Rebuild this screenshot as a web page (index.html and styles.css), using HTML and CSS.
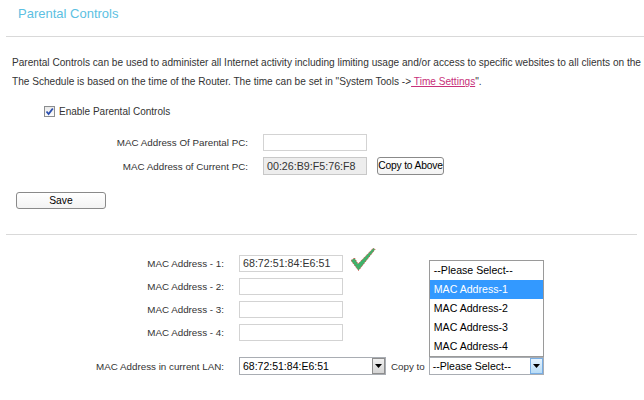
FILE: index.html
```html
<!DOCTYPE html>
<html>
<head>
<meta charset="utf-8">
<link rel="stylesheet" href="styles.css">
</head>
<body>
<div class="page">
  <div class="title">Parental Controls</div>
  <div class="rule"></div>
  <div class="desc">
    <div class="line">Parental Controls can be used to administer all Internet activity including limiting usage and/or access to specific websites to all clients on the LAN.</div>
    <div class="line">The Schedule is based on the time of the Router. The time can be set in "System Tools -&gt;<a class="link" href="#">&nbsp;Time Settings</a>".</div>
  </div>
  <div class="enable">
    <span class="cbox"><svg width="9" height="9" viewBox="0 0 9 9"><path d="M1.5 4.5 L3.6 7 L7.8 1.5" fill="none" stroke="#2b4fb0" stroke-width="1.8"/></svg></span>
    <span>Enable Parental Controls</span>
  </div>
  <div class="form1">
    <div class="row r1">
      <div class="lab">MAC Address Of Parental PC:</div>
      <div class="inp"></div>
    </div>
    <div class="row r2">
      <div class="lab">MAC Address of Current PC:</div>
      <div class="inp ro">00:26:B9:F5:76:F8</div>
      <div class="btn copy">Copy to Above</div>
    </div>
  </div>
  <div class="btn save">Save</div>
  <div class="rule rule2"></div>
  <div class="form2">
    <div class="row">
      <div class="lab">MAC Address - 1:</div>
      <div class="inp">68:72:51:84:E6:51</div>
      <svg class="tick" width="28" height="25" viewBox="0 0 28 25"><path d="M2 13.5 L5.5 11 L9 17 L24.5 1 L26 2.5 L9.5 23.5 Z" fill="#3fb16a" stroke="#d8322e" stroke-width="0.9" stroke-dasharray="1 1.2"/></svg>
    </div>
    <div class="row">
      <div class="lab">MAC Address - 2:</div>
      <div class="inp"></div>
    </div>
    <div class="row">
      <div class="lab">MAC Address - 3:</div>
      <div class="inp"></div>
    </div>
    <div class="row">
      <div class="lab">MAC Address - 4:</div>
      <div class="inp"></div>
    </div>
    <div class="row lanrow">
      <div class="lab">MAC Address in current LAN:</div>
      <div class="sel sel1"><span class="seltext">68:72:51:84:E6:51</span><span class="arr"><svg width="7" height="4" viewBox="0 0 7 4"><path d="M0 0 H7 L3.5 4 Z" fill="#000"/></svg></span></div>
      <span class="copyto">Copy to</span>
      <div class="sel sel2"><span class="seltext">--Please Select--</span><span class="arr arr2"><svg width="7" height="4" viewBox="0 0 7 4"><path d="M0 0 H7 L3.5 4 Z" fill="#000"/></svg></span>
        <div class="menu">
          <div class="opt">--Please Select--</div>
          <div class="opt hl">MAC Address-1</div>
          <div class="opt">MAC Address-2</div>
          <div class="opt">MAC Address-3</div>
          <div class="opt">MAC Address-4</div>
        </div>
      </div>
    </div>
  </div>
</div>
</body>
</html>
```
FILE: styles.css
```css
html, body {
  margin: 0;
  padding: 0;
  background: #fff;
}
body {
  width: 644px;
  height: 400px;
  overflow: hidden;
  font-family: "Liberation Sans", Arial, sans-serif;
  font-size: 9.8px;
  color: #333;
}
.page {
  width: 644px;
}
.title {
  height: 36px;
  line-height: 28px;
  padding-left: 18px;
  font-size: 13px;
  color: #5cbfe2;
}
.rule {
  height: 0;
  border-top: 1px solid #d9d9d9;
  margin-left: 6px;
}
.desc {
  padding-top: 16px;
  padding-left: 12px;
  line-height: 19px;
  font-size: 10.1px;
}
.line {
  white-space: nowrap;
  overflow: hidden;
  width: 632px;
}
.link {
  color: #c8307a;
  text-decoration: underline;
}
.enable {
  margin-top: 13px;
  height: 14px;
  padding-left: 44px;
  display: flex;
  align-items: center;
  gap: 4px;
  font-size: 10px;
}
.cbox {
  width: 9px;
  height: 9px;
  border: 1px solid #8b8d8f;
  background: linear-gradient(#e9e9e9, #fdfdfd);
  display: flex;
  align-items: center;
  justify-content: center;
}
.form1 {
  margin-top: 16px;
  display: flex;
  flex-direction: column;
  gap: 6px;
}
.row {
  display: flex;
  align-items: center;
}
.lab {
  text-align: right;
  white-space: nowrap;
}
.form1 .lab {
  width: 248px;
  margin-right: 15px;
}
.inp {
  box-sizing: border-box;
  width: 104px;
  height: 17px;
  border: 1px solid #d3d3d3;
  background: #fff;
  font-size: 10.7px;
  line-height: 15px;
  padding-left: 3px;
  color: #333;
}
.r2 .inp {
  height: 18px;
  line-height: 16px;
}
.inp.ro {
  background: #ededed;
  border-color: #c8c8c8;
}
.btn {
  box-sizing: border-box;
  border: 1px solid #8a8a8a;
  border-radius: 3px;
  background: linear-gradient(#ffffff, #f3f3f3);
  text-align: center;
  color: #000;
  font-size: 10.3px;
}
.copy {
  margin-left: 10px;
  width: 67px;
  height: 18px;
  line-height: 16px;
  letter-spacing: -0.2px;
}
.save {
  margin-top: 17px;
  margin-left: 16px;
  width: 90px;
  height: 17px;
  line-height: 15px;
}
.rule2 {
  margin-top: 25px;
  margin-right: 7px;
}
.form2 {
  margin-top: 20px;
  display: flex;
  flex-direction: column;
  gap: 6px;
}
.form2 .lab {
  width: 224px;
  margin-right: 15px;
}
.tick {
  margin-left: 6px;
  align-self: flex-end;
}
.form2 .row:first-child {
  height: 17px;
}
.form2 .row:first-child .tick {
  margin-top: -8px;
  margin-bottom: 0;
}
.lanrow {
  margin-top: 10px;
  height: 18px;
}
.sel {
  position: relative;
  box-sizing: border-box;
  height: 18px;
  border: 1px solid #a9adb3;
  background: #fff;
  display: flex;
  align-items: center;
  justify-content: space-between;
  color: #000;
  font-size: 10.5px;
}
.sel1 {
  width: 147px;
}
.sel2 {
  width: 115px;
}
.seltext {
  padding-left: 3px;
  white-space: nowrap;
}
.arr {
  box-sizing: border-box;
  width: 13px;
  height: 16px;
  border: 1px solid #8e8e8e;
  background: linear-gradient(#f0f0f0, #d4d4d4);
  display: flex;
  align-items: center;
  justify-content: center;
}
.arr2 {
  border-color: #78aee5;
  background: linear-gradient(#e6f3fd, #b8dcf6);
}
.copyto {
  margin-left: 5px;
  margin-right: 4px;
  color: #333;
}
.menu {
  position: absolute;
  left: -1px;
  bottom: 100%;
  width: 115px;
  box-sizing: border-box;
  border: 1px solid #9a9a9a;
  background: #fff;
  margin-bottom: 1px;
}
.opt {
  height: 19px;
  line-height: 19px;
  padding-left: 4px;
  font-size: 10.6px;
  color: #000;
  white-space: nowrap;
}
.opt.hl {
  background: #3399ff;
  color: #fff;
}
```
